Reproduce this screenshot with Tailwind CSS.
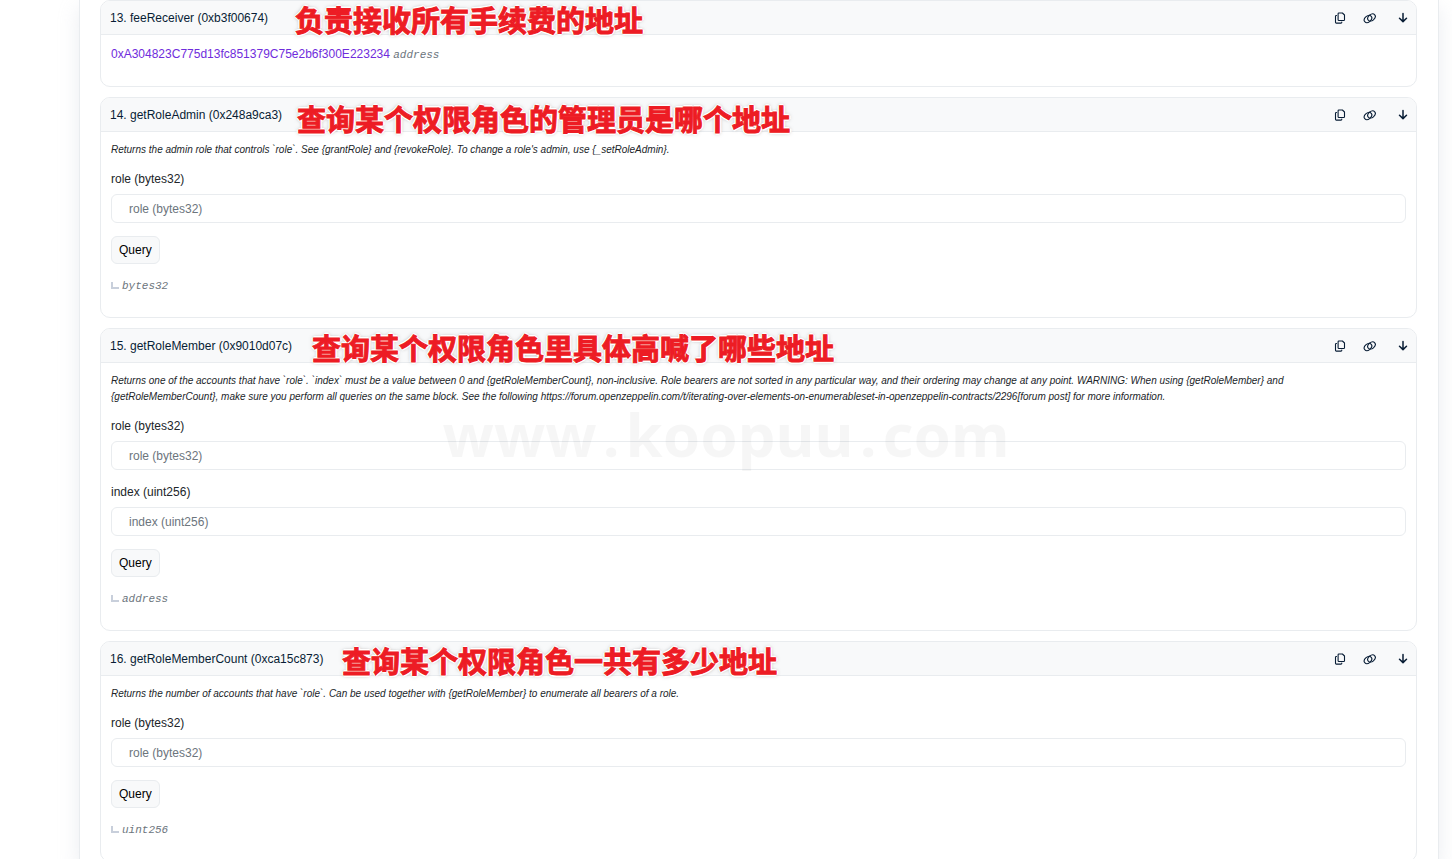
<!DOCTYPE html>
<html lang="en">
<head>
    <meta charset="UTF-8">
    <meta name="viewport" content="width=device-width, initial-scale=1.0">
    <title>Read Contract</title>
    <script src="https://cdn.jsdelivr.net/npm/@tailwindcss/browser@4"></script>
</head>
<body class="h-screen overflow-hidden bg-white font-['Liberation_Sans',Arial,sans-serif] text-xs leading-[18px] text-[#212529]">
    <!-- Shared icons -->
    <svg class="hidden">
        <symbol id="icon-copy" viewBox="0 0 12 12">
            <g fill="none" stroke="currentColor" stroke-width="1.1" stroke-linejoin="round" stroke-linecap="round">
                <path d="M4.9 1h3.500L10.500 3v4.700a.8.8 0 0 1-.8.8H4.900a.8.8 0 0 1-.8-.8V1.800a.8.8 0 0 1 .8-.8z"/>
                <path d="M2.500 3.500h-.2a.8.8 0 0 0-.8.8v6a.8.8 0 0 0 .8.8H7a.8.8 0 0 0 .8-.8V10"/>
            </g>
        </symbol>
        <symbol id="icon-link" viewBox="0 0 14 12">
            <g fill="none" stroke="currentColor" stroke-width="1.1" stroke-linecap="round">
                <ellipse cx="5" cy="7" rx="4.200" ry="3" transform="rotate(-40 5 7)"/>
                <ellipse cx="8.500" cy="5.500" rx="4.200" ry="3" transform="rotate(-40 8.500 5.500)"/>
            </g>
        </symbol>
        <symbol id="icon-down" viewBox="0 0 10 12">
            <path d="M5 1.500v8M1.500 6.200L5 9.600l3.500-3.400" fill="none" stroke="currentColor" stroke-width="1.500" stroke-linecap="round" stroke-linejoin="round"/>
        </symbol>
        <symbol id="icon-return" viewBox="0 0 8 8">
            <path d="M1 0v6h7" fill="none" stroke="currentColor" stroke-width="2"/>
        </symbol>
    </svg>

    <main class="ml-[79px] mr-[13px] min-h-screen space-y-[10px] border-x border-[#e9ecef] pl-5 pr-[21px] shadow-[0_8px_19px_rgba(189,197,209,0.3)]">
        <section class="rounded-[10px] border border-[#e9ecef]">
            <header class="relative flex h-[34px] items-center justify-between rounded-t-[9px] border-b border-[#e9ecef] bg-[#f8f9fa] pl-[9px] pr-2">
                <h2 class="text-[#081d35]">13. feeReceiver (0xb3f00674)</h2>
                <div class="flex items-center text-[#081d35]">
                    <button type="button" aria-label="Copy method" class="mr-[17px]"><svg class="h-3 w-3"><use href="#icon-copy"/></svg></button>
                    <a href="#F13" aria-label="Permalink" class="mr-[21px]"><svg class="h-3 w-[14px]"><use href="#icon-link"/></svg></a>
                    <button type="button" aria-label="Toggle"><svg class="h-3 w-[10px]"><use href="#icon-down"/></svg></button>
                </div>
                <p class="absolute left-[194px] top-0 whitespace-nowrap font-['Noto_Sans_CJK_SC',sans-serif] text-[29px] font-bold leading-[36px] text-[#ed1c24] [-webkit-text-stroke:1px_#ed1c24] [text-shadow:1px_1px_0_#fff,-1px_-1px_0_#fff,1px_-1px_0_#fff,-1px_1px_0_#fff,2px_0_0_#fff,-2px_0_0_#fff,0_2px_0_#fff,0_-2px_0_#fff,0_0_4px_#777]">负责接收所有手续费的地址</p>
            </header>
            <div class="px-[10px] pb-[22px] pt-[10px]">
                <p><a href="#" class="text-[#6f2cdc]">0xA304823C775d13fc851379C75e2b6f300E223234</a> <i class="font-['Liberation_Mono',monospace] text-[11px] text-[#6c757d]">address</i></p>
            </div>
        </section>

        <section class="rounded-[10px] border border-[#e9ecef]">
            <header class="relative flex h-[34px] items-center justify-between rounded-t-[9px] border-b border-[#e9ecef] bg-[#f8f9fa] pl-[9px] pr-2">
                <h2 class="text-[#081d35]">14. getRoleAdmin (0x248a9ca3)</h2>
                <div class="flex items-center text-[#081d35]">
                    <button type="button" aria-label="Copy method" class="mr-[17px]"><svg class="h-3 w-3"><use href="#icon-copy"/></svg></button>
                    <a href="#F14" aria-label="Permalink" class="mr-[21px]"><svg class="h-3 w-[14px]"><use href="#icon-link"/></svg></a>
                    <button type="button" aria-label="Toggle"><svg class="h-3 w-[10px]"><use href="#icon-down"/></svg></button>
                </div>
                <p class="absolute left-[196px] top-[2px] whitespace-nowrap font-['Noto_Sans_CJK_SC',sans-serif] text-[29px] font-bold leading-[36px] text-[#ed1c24] [-webkit-text-stroke:1px_#ed1c24] [text-shadow:1px_1px_0_#fff,-1px_-1px_0_#fff,1px_-1px_0_#fff,-1px_1px_0_#fff,2px_0_0_#fff,-2px_0_0_#fff,0_2px_0_#fff,0_-2px_0_#fff,0_0_4px_#777]">查询某个权限角色的管理员是哪个地址</p>
            </header>
            <form class="px-[10px] pb-[22px] pt-[10px]">
                <p class="mb-3 pr-5 text-[10px] italic leading-4">Returns the admin role that controls `role`. See {grantRole} and {revokeRole}. To change a role's admin, use {_setRoleAdmin}.</p>
                <label for="admin-role" class="mb-[6px] block">role (bytes32)</label>
                <input id="admin-role" type="text" placeholder="role (bytes32)" class="mb-[13px] block h-[29px] w-full rounded-md border border-[#e9ecef] px-[17px] placeholder:text-[#6c757d]">
                <button type="button" class="mb-[13px] block h-7 rounded-md border border-[#e9ecef] bg-[#f8f9fa] px-[7px] text-black">Query</button>
                <p class="flex items-center gap-[3px] text-[#6c757d]"><svg class="h-2 w-2 text-[#c8cfdb]"><use href="#icon-return"/></svg><i class="font-['Liberation_Mono',monospace] text-[11px]">bytes32</i></p>
            </form>
        </section>

        <section class="rounded-[10px] border border-[#e9ecef]">
            <header class="relative flex h-[34px] items-center justify-between rounded-t-[9px] border-b border-[#e9ecef] bg-[#f8f9fa] pl-[9px] pr-2">
                <h2 class="text-[#081d35]">15. getRoleMember (0x9010d07c)</h2>
                <div class="flex items-center text-[#081d35]">
                    <button type="button" aria-label="Copy method" class="mr-[17px]"><svg class="h-3 w-3"><use href="#icon-copy"/></svg></button>
                    <a href="#F15" aria-label="Permalink" class="mr-[21px]"><svg class="h-3 w-[14px]"><use href="#icon-link"/></svg></a>
                    <button type="button" aria-label="Toggle"><svg class="h-3 w-[10px]"><use href="#icon-down"/></svg></button>
                </div>
                <p class="absolute left-[211px] top-0 whitespace-nowrap font-['Noto_Sans_CJK_SC',sans-serif] text-[29px] font-bold leading-[36px] text-[#ed1c24] [-webkit-text-stroke:1px_#ed1c24] [text-shadow:1px_1px_0_#fff,-1px_-1px_0_#fff,1px_-1px_0_#fff,-1px_1px_0_#fff,2px_0_0_#fff,-2px_0_0_#fff,0_2px_0_#fff,0_-2px_0_#fff,0_0_4px_#777]">查询某个权限角色里具体高喊了哪些地址</p>
            </header>
            <form class="px-[10px] pb-[22px] pt-[10px]">
                <p class="mb-3 pr-5 text-[10px] italic leading-4">Returns one of the accounts that have `role`. `index` must be a value between 0 and {getRoleMemberCount}, non-inclusive. Role bearers are not sorted in any particular way, and their ordering may change at any point. WARNING: When using {getRoleMember} and {getRoleMemberCount}, make sure you perform all queries on the same block. See the following https://forum.openzeppelin.com/t/iterating-over-elements-on-enumerableset-in-openzeppelin-contracts/2296[forum post] for more information.</p>
                <label for="member-role" class="mb-[6px] block">role (bytes32)</label>
                <input id="member-role" type="text" placeholder="role (bytes32)" class="mb-[13px] block h-[29px] w-full rounded-md border border-[#e9ecef] px-[17px] placeholder:text-[#6c757d]">
                <label for="member-index" class="mb-[6px] block">index (uint256)</label>
                <input id="member-index" type="text" placeholder="index (uint256)" class="mb-[13px] block h-[29px] w-full rounded-md border border-[#e9ecef] px-[17px] placeholder:text-[#6c757d]">
                <button type="button" class="mb-[13px] block h-7 rounded-md border border-[#e9ecef] bg-[#f8f9fa] px-[7px] text-black">Query</button>
                <p class="flex items-center gap-[3px] text-[#6c757d]"><svg class="h-2 w-2 text-[#c8cfdb]"><use href="#icon-return"/></svg><i class="font-['Liberation_Mono',monospace] text-[11px]">address</i></p>
            </form>
        </section>

        <section class="rounded-[10px] border border-[#e9ecef]">
            <header class="relative flex h-[34px] items-center justify-between rounded-t-[9px] border-b border-[#e9ecef] bg-[#f8f9fa] pl-[9px] pr-2">
                <h2 class="text-[#081d35]">16. getRoleMemberCount (0xca15c873)</h2>
                <div class="flex items-center text-[#081d35]">
                    <button type="button" aria-label="Copy method" class="mr-[17px]"><svg class="h-3 w-3"><use href="#icon-copy"/></svg></button>
                    <a href="#F16" aria-label="Permalink" class="mr-[21px]"><svg class="h-3 w-[14px]"><use href="#icon-link"/></svg></a>
                    <button type="button" aria-label="Toggle"><svg class="h-3 w-[10px]"><use href="#icon-down"/></svg></button>
                </div>
                <p class="absolute left-[241px] top-0 whitespace-nowrap font-['Noto_Sans_CJK_SC',sans-serif] text-[29px] font-bold leading-[36px] text-[#ed1c24] [-webkit-text-stroke:1px_#ed1c24] [text-shadow:1px_1px_0_#fff,-1px_-1px_0_#fff,1px_-1px_0_#fff,-1px_1px_0_#fff,2px_0_0_#fff,-2px_0_0_#fff,0_2px_0_#fff,0_-2px_0_#fff,0_0_4px_#777]">查询某个权限角色一共有多少地址</p>
            </header>
            <form class="px-[10px] pb-[22px] pt-[10px]">
                <p class="mb-3 pr-5 text-[10px] italic leading-4">Returns the number of accounts that have `role`. Can be used together with {getRoleMember} to enumerate all bearers of a role.</p>
                <label for="count-role" class="mb-[6px] block">role (bytes32)</label>
                <input id="count-role" type="text" placeholder="role (bytes32)" class="mb-[13px] block h-[29px] w-full rounded-md border border-[#e9ecef] px-[17px] placeholder:text-[#6c757d]">
                <button type="button" class="mb-[13px] block h-7 rounded-md border border-[#e9ecef] bg-[#f8f9fa] px-[7px] text-black">Query</button>
                <p class="flex items-center gap-[3px] text-[#6c757d]"><svg class="h-2 w-2 text-[#c8cfdb]"><use href="#icon-return"/></svg><i class="font-['Liberation_Mono',monospace] text-[11px]">uint256</i></p>
            </form>
        </section>
    </main>

    <!-- Watermark -->
    <div class="pointer-events-none fixed inset-0 flex items-center justify-center gap-[6px] pt-2 font-['Noto_Sans',sans-serif] text-[60px] font-bold leading-none text-black/[0.035]">
        <span>www</span><span>.</span><span>koopuu</span><span>.</span><span>com</span>
    </div>
</body>
</html>
